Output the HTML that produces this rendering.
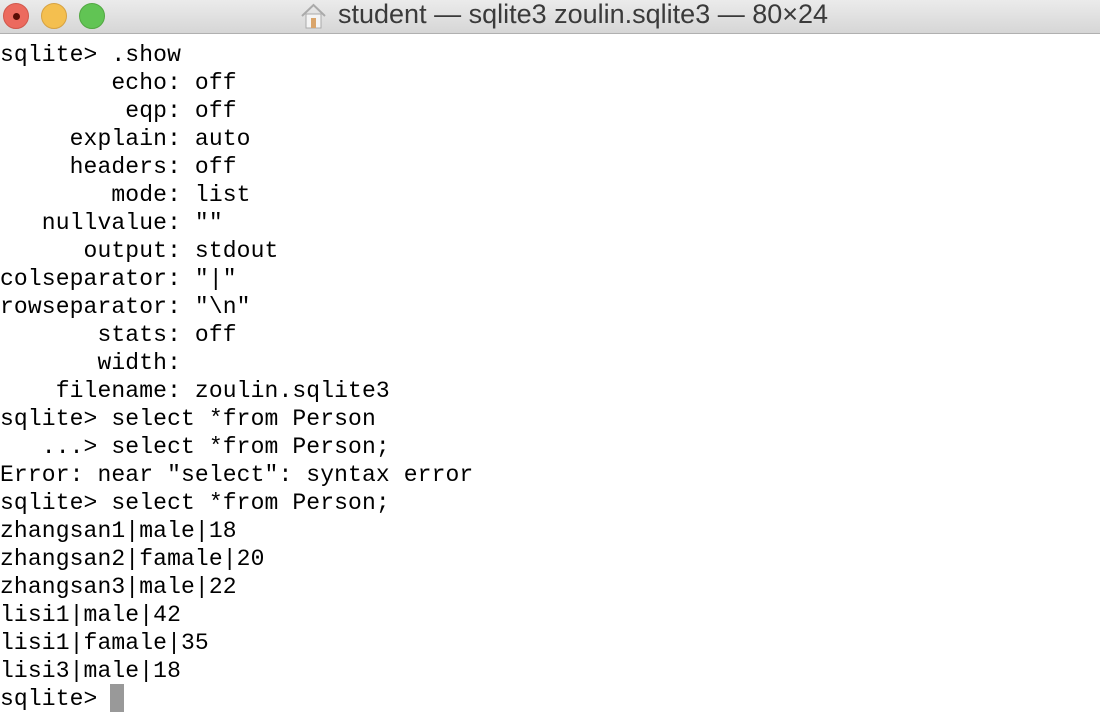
<!DOCTYPE html>
<html><head><style>
body{margin:0;width:1100px;height:722px;overflow:hidden;background:#fff;position:relative}
.tb{position:absolute;left:0;top:0;width:1100px;height:33px;background:linear-gradient(#ebebeb,#d6d6d6);border-bottom:1px solid #b0b0b0}
.dot{position:absolute;top:3px;width:26px;height:26px;border-radius:50%}
.title{position:absolute;left:338px;top:-1px;font:27px "Liberation Sans",sans-serif;color:#3a3a3a;white-space:nowrap}
pre{position:absolute;left:0;top:41px;margin:0;font:23px/28px "Liberation Mono",monospace;letter-spacing:0.12px;color:#000}
.cur{position:absolute;left:110px;top:684px;width:14px;height:28px;background:#999}
</style></head><body>
<div class="tb">
<div class="dot" style="left:3px;background:#ec6a5e;border:1px solid #d0584c;box-sizing:border-box"><div style="position:absolute;left:9px;top:9px;width:7px;height:7px;border-radius:50%;background:#5a0d05"></div></div>
<div class="dot" style="left:41px;background:#f4bf4f;border:1px solid #d6a243;box-sizing:border-box"></div>
<div class="dot" style="left:79px;background:#61c454;border:1px solid #52a842;box-sizing:border-box"></div>
<svg style="position:absolute;left:300px;top:3px" width="27" height="26" viewBox="0 0 27 26"><path d="M2 13 L13.5 2 L25 13" fill="none" stroke="#aaa" stroke-width="2"/><rect x="6" y="11" width="15" height="14" fill="#f4f4f4" stroke="#aaa"/><rect x="11" y="15" width="5" height="10" fill="#d9a46a"/></svg>
<div class="title">student — sqlite3 zoulin.sqlite3 — 80×24</div>
</div>
<pre>sqlite&gt; .show
        echo: off
         eqp: off
     explain: auto
     headers: off
        mode: list
   nullvalue: ""
      output: stdout
colseparator: "|"
rowseparator: "\n"
       stats: off
       width:
    filename: zoulin.sqlite3
sqlite&gt; select *from Person
   ...&gt; select *from Person;
Error: near "select": syntax error
sqlite&gt; select *from Person;
zhangsan1|male|18
zhangsan2|famale|20
zhangsan3|male|22
lisi1|male|42
lisi1|famale|35
lisi3|male|18
sqlite&gt; </pre>
<div class="cur"></div>
</body></html>
